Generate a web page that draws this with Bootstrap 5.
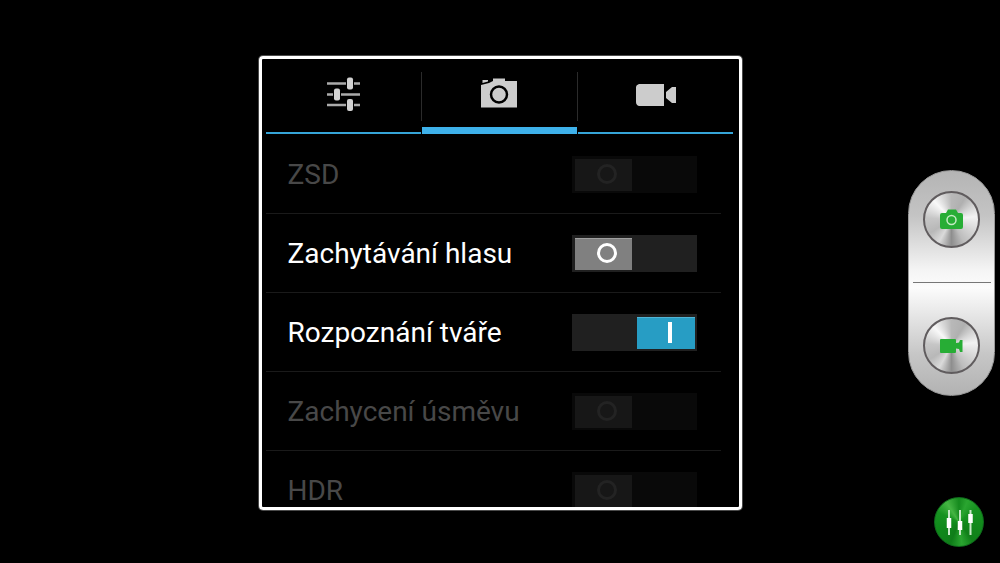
<!DOCTYPE html>
<html lang="cs">
<head>
<meta charset="utf-8">
<meta name="viewport" content="width=device-width, initial-scale=1">
<title>Fotoaparát – nastavení</title>
<link href="https://cdn.jsdelivr.net/npm/bootstrap@5.3.0/dist/css/bootstrap.min.css" rel="stylesheet">
<style>
body { background: #000; color: #fff; font-family: Roboto, "Noto Sans", sans-serif; }
.viewfinder { display: grid; grid-template-columns: 1fr minmax(0, 483px) 1fr; height: 100vh; padding-top: 3px; }
.settings-panel { grid-column: 2; height: calc(100vh - 109px); border: 3px solid #fff; border-radius: 4px; box-shadow: 0 0 0 1px #4a4a4a; }
.tab-strip { margin: 0 5px 1px 4px; height: 75px; }
.tab-strip .tab-btn { flex: 1 1 0; background: none; border: 0; border-bottom: 2px solid #36a5d8; border-radius: 0; padding: 0 0 4px; position: relative; }
.tab-strip .tab-btn.active { border-bottom: 7px solid #3eb1ea; padding-bottom: 0; }
.tab-strip .tab-btn + .tab-btn::before { content: ""; position: absolute; left: -1px; top: 13px; width: 1px; height: 49px; background: #2b2b2b; }
.tab-strip .tab-btn + .tab-btn { margin-left: 1px; }
.option-list { overflow-y: auto; scrollbar-width: none; padding: 0 18px 0 4px; min-height: 0; }
.option-list::-webkit-scrollbar { display: none; }
.option-row { height: 79px; padding: 0 24px 0 22px; border-bottom: 1px solid #1a1a1a; flex-shrink: 0; }
.option-row label { font-size: 28px; line-height: 36px; padding-top: 2px; }
.option-row.off-limits label { color: #484848; }
.toggle-box { appearance: none; margin: 0; width: 125px; height: 37px; background: #202020 url("data:image/svg+xml,%3Csvg xmlns='http://www.w3.org/2000/svg' width='125' height='37'%3E%3Cpath fill='%23808080' d='M3 3h57v32H3z'/%3E%3Cpath stroke='%23a0a0a0' d='M3 3.500h57'/%3E%3Ccircle cx='35' cy='18' r='8.500' fill='none' stroke='%23fff' stroke-width='3'/%3E%3C/svg%3E") no-repeat; }
.toggle-box:checked { background-image: url("data:image/svg+xml,%3Csvg xmlns='http://www.w3.org/2000/svg' width='125' height='37'%3E%3Cpath fill='%23279dc4' d='M65 3h58v32H65z'/%3E%3Cpath stroke='%2350b5d6' d='M65 3.500h58'/%3E%3Cpath fill='%23fff' d='M96 8h4v21h-4z'/%3E%3C/svg%3E"); }
.toggle-box:disabled { background-color: #090909; background-image: url("data:image/svg+xml,%3Csvg xmlns='http://www.w3.org/2000/svg' width='125' height='37'%3E%3Cpath fill='%23171717' d='M3 3h57v32H3z'/%3E%3Ccircle cx='35' cy='18' r='8.500' fill='none' stroke='%23232323' stroke-width='3'/%3E%3C/svg%3E"); }
.side-rail { display: grid; grid-template-rows: 1fr auto 1fr; }
.shutter-pill { grid-row: 2; width: 87px; height: 226px; padding: 20px 0 21px; margin-right: 5px; border-radius: 44px; border: 1px solid #999; background: linear-gradient(#b4b4b4, #c4c4c4 20%, #f4f4f4 44%, #fcfcfc 52%, #eee 60%, #c6c6c6 82%, #b2b2b2); }
.shutter-pill hr { width: 78px; margin: 0; border-top: 1px solid #777; opacity: 1; }
.metal-btn { width: 57px; height: 57px; padding: 0; border: 2px solid #605c5e; border-radius: 50%; background: conic-gradient(#b8b8b8, #b0b0b0 9%, #d4d4d4 16%, #f2f2f2 23%, #d8d8d8 32%, #bdbdbd 42%, #8e8e8e 50%, #dadada 58%, #b8b8b8 66%, #c6c6c6 76%, #e0e0e0 82%, #f8f8f8 88%, #d8d8d8 94%, #b8b8b8); }
.mode-btn { grid-row: 3; width: 50px; height: 50px; margin: 0 16px 16px 0; padding: 0; border: 1px solid #0f6a1c; border-radius: 50%; background: conic-gradient(#158a1e, #2aa530 6%, #179321 14%, #128a1c 26%, #108019 40%, #2aa530 48%, #0f7d19 56%, #0f8a1b 70%, #179321 82%, #45b543 91%, #158a1e); }
</style>
</head>
<body>
<main class="viewfinder align-items-center">
  <section class="settings-panel d-flex flex-column overflow-hidden" aria-label="Nastavení">
    <div class="tab-strip d-flex flex-shrink-0" role="tablist">
      <button class="tab-btn" type="button" role="tab" aria-label="Obecné" aria-selected="false">
        <svg width="36" height="36" viewBox="0 0 36 36"><path d="M2 7.500h19m8 0h6M2 18.500h6m8 0h19M2 29h19m8 0h6" stroke="#aaa" stroke-width="2.500"/><g fill="#d2d2d2"><rect x="22" y="1.500" width="6" height="12" rx="2"/><rect x="9" y="12.500" width="6" height="12" rx="2"/><rect x="22" y="23" width="6" height="12" rx="2"/></g></svg>
      </button>
      <button class="tab-btn active" type="button" role="tab" aria-label="Foto" aria-selected="true">
        <svg width="36" height="36" viewBox="0 0 36 36"><path fill="#ccc" d="M0 10 8 8l4-2V3.500h12V6h12v26.500H0zM1.500 5H7v1.500L1.500 8z"/><circle cx="18" cy="19.500" r="8" fill="none" stroke="#000" stroke-width="2.500"/></svg>
      </button>
      <button class="tab-btn" type="button" role="tab" aria-label="Video" aria-selected="false">
        <svg width="42" height="36" viewBox="0 0 42 36"><path fill="#ccc" d="M4 8h25v22H4q-3-1-3-4V11q0-2 3-3zM41 11v16h-4l-6-5v-6l6-5z"/></svg>
      </button>
    </div>
    <div class="option-list d-flex flex-column">
      <div class="option-row off-limits d-flex align-items-center justify-content-between"><label for="zsd">ZSD</label><input class="toggle-box" type="checkbox" role="switch" id="zsd" disabled></div>
      <div class="option-row d-flex align-items-center justify-content-between"><label for="voice">Zachytávání hlasu</label><input class="toggle-box" type="checkbox" role="switch" id="voice"></div>
      <div class="option-row d-flex align-items-center justify-content-between"><label for="face">Rozpoznání tváře</label><input class="toggle-box" type="checkbox" role="switch" id="face" checked></div>
      <div class="option-row off-limits d-flex align-items-center justify-content-between"><label for="smile">Zachycení úsměvu</label><input class="toggle-box" type="checkbox" role="switch" id="smile" disabled></div>
      <div class="option-row off-limits d-flex align-items-center justify-content-between"><label for="hdr">HDR</label><input class="toggle-box" type="checkbox" role="switch" id="hdr" disabled></div>
    </div>
  </section>
  <aside class="side-rail h-100">
    <div class="shutter-pill d-flex flex-column align-items-center justify-content-between ms-auto">
      <button class="metal-btn d-flex align-items-center justify-content-center" type="button" aria-label="Vyfotit">
        <svg width="23" height="21" viewBox="0 0 23 21"><path fill="#27ad35" d="M2 4h4l2-3.500h8L18 4h3q2 0 2 2v12q0 2-2 2H2q-2 0-2-2V6q0-2 2-2z"/><circle cx="11.500" cy="11" r="4.500" fill="none" stroke="#c4ecc4" stroke-width="1.500"/></svg>
      </button>
      <hr>
      <button class="metal-btn d-flex align-items-center justify-content-center" type="button" aria-label="Natáčet">
        <svg width="23" height="16" viewBox="0 0 23 16"><path fill="#27ad35" d="M1 1h14q1 0 1 1v3l3-.5 1-2.500h2.500v12H20l-1-3-3-.5V14q0 1-1 1H1q-1 0-1-1V2q0-1 1-1z"/></svg>
      </button>
    </div>
    <button class="mode-btn d-flex align-items-center justify-content-center align-self-end ms-auto" type="button" aria-label="Režimy">
      <svg width="28" height="28" viewBox="0 0 28 28"><path d="M4 2v25M15 2v25M25.500 2v25" stroke="#c8e8c8" stroke-width="2"/><path d="M4 10v10M15 13v9M25.500 6v9" stroke="#fff" stroke-width="4.500"/></svg>
    </button>
  </aside>
</main>
<script src="https://cdn.jsdelivr.net/npm/bootstrap@5.3.0/dist/js/bootstrap.bundle.min.js"></script>
</body>
</html>
